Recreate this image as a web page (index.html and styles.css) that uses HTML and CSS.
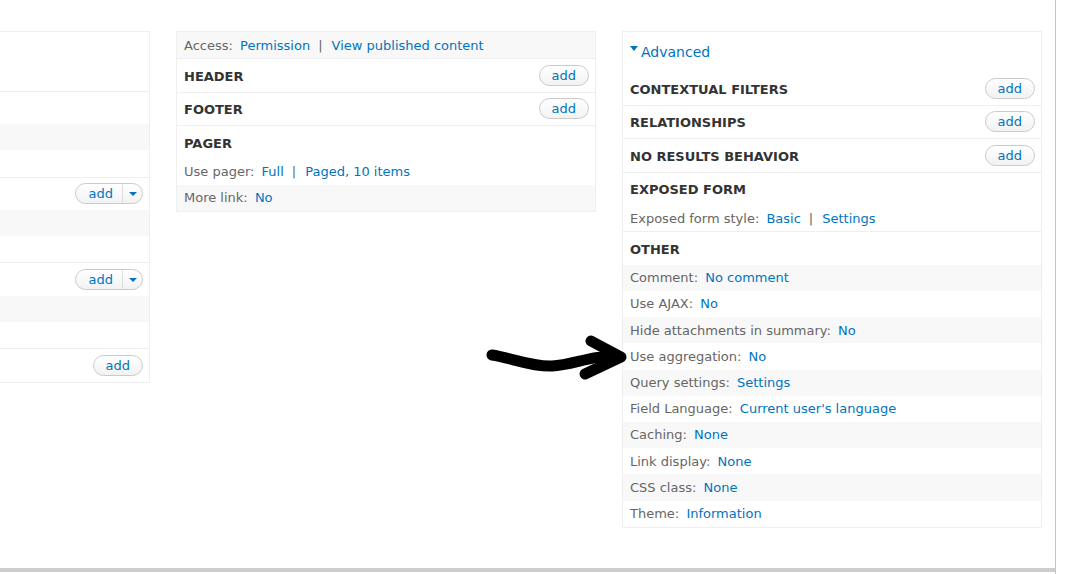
FILE: index.html
```html
<!DOCTYPE html>
<html lang="en">
<head>
<meta charset="utf-8">
<title>Views UI</title>
<link rel="stylesheet" href="styles.css">
</head>
<body>
<div class="page">
  <div class="content">
    <div class="columns">
      <div class="col col-first">
        <div class="bucket">
          <div class="title"></div>
          <div class="setting"></div>
        </div>
        <div class="bucket">
          <div class="title"></div>
          <div class="setting odd"></div>
          <div class="setting"></div>
        </div>
        <div class="bucket">
          <div class="title">
            <span class="btn split"><span class="split-main">add</span><span class="split-caret"><span class="caret"></span></span></span>
          </div>
          <div class="setting odd"></div>
          <div class="setting"></div>
        </div>
        <div class="bucket">
          <div class="title">
            <span class="btn split"><span class="split-main">add</span><span class="split-caret"><span class="caret"></span></span></span>
          </div>
          <div class="setting odd"></div>
          <div class="setting"></div>
        </div>
        <div class="bucket">
          <div class="title"><span class="btn">add</span></div>
        </div>
      </div>

      <div class="col">
        <div class="bucket">
          <div class="setting odd"><span class="lbl">Access:</span> <a href="#">Permission</a><span class="sep">|</span><a href="#">View published content</a></div>
        </div>
        <div class="bucket">
          <div class="title"><h3>Header</h3><span class="btn">add</span></div>
        </div>
        <div class="bucket">
          <div class="title"><h3>Footer</h3><span class="btn">add</span></div>
        </div>
        <div class="bucket">
          <div class="title"><h3>Pager</h3></div>
          <div class="setting"><span class="lbl">Use pager:</span> <a href="#">Full</a><span class="sep">|</span><a href="#">Paged, 10 items</a></div>
          <div class="setting odd"><span class="lbl">More link:</span> <a href="#">No</a></div>
        </div>
      </div>

      <div class="col">
        <div class="advanced"><span class="adv-caret"></span><a href="#">Advanced</a></div>
        <div class="bucket first">
          <div class="title"><h3>Contextual filters</h3><span class="btn">add</span></div>
        </div>
        <div class="bucket">
          <div class="title"><h3>Relationships</h3><span class="btn">add</span></div>
        </div>
        <div class="bucket">
          <div class="title"><h3>No results behavior</h3><span class="btn">add</span></div>
        </div>
        <div class="bucket">
          <div class="title"><h3>Exposed form</h3></div>
          <div class="setting"><span class="lbl">Exposed form style:</span> <a href="#">Basic</a><span class="sep">|</span><a href="#">Settings</a></div>
        </div>
        <div class="bucket">
          <div class="title"><h3>Other</h3></div>
          <div class="setting odd"><span class="lbl">Comment:</span> <a href="#">No comment</a></div>
          <div class="setting"><span class="lbl">Use AJAX:</span> <a href="#">No</a></div>
          <div class="setting odd"><span class="lbl">Hide attachments in summary:</span> <a href="#">No</a></div>
          <div class="setting"><span class="lbl">Use aggregation:</span> <a href="#">No</a></div>
          <div class="setting odd"><span class="lbl">Query settings:</span> <a href="#">Settings</a></div>
          <div class="setting"><span class="lbl">Field Language:</span> <a href="#">Current user's language</a></div>
          <div class="setting odd"><span class="lbl">Caching:</span> <a href="#">None</a></div>
          <div class="setting"><span class="lbl">Link display:</span> <a href="#">None</a></div>
          <div class="setting odd"><span class="lbl">CSS class:</span> <a href="#">None</a></div>
          <div class="setting"><span class="lbl">Theme:</span> <a href="#">Information</a></div>
        </div>
      </div>
    </div>
  </div>
</div>
<svg class="scribble" width="1079" height="574" viewBox="0 0 1079 574" aria-hidden="true">
  <path d="M492 355 C512 358 532 367 552 366 C574 365 594 354 619 357" fill="none" stroke="#000" stroke-width="11" stroke-linecap="round" stroke-linejoin="round"/>
  <path d="M591 341 L621 357 L585 374" fill="none" stroke="#000" stroke-width="11" stroke-linecap="round" stroke-linejoin="round"/>
</svg>
</body>
</html>
```

FILE: styles.css
```css
* { box-sizing: border-box; }
html, body { margin: 0; padding: 0; background: #fff; }
body {
  font-family: "DejaVu Sans", Verdana, sans-serif;
  font-size: 13px;
  color: #333;
  overflow: hidden;
  position: relative;
}
a { color: #0074bd; text-decoration: none; }

.page {
  width: 1056px;
  height: 574px;
  border-right: 1px solid #c4c4c4;
}
.content {
  height: 572px;
  border-bottom: 4px solid #cdcdcd;
  overflow: hidden;
}
.columns {
  display: flex;
  align-items: flex-start;
  gap: 26px;
  padding-top: 31px;
}
.col {
  flex: none;
  width: 420px;
  border: 1px solid #efefef;
}
.col-first {
  width: 600px;
  margin-left: -450px;
}

.bucket + .bucket { border-top: 1px solid #efefef; }
.bucket.first { border-top: 0; }

.title {
  display: flex;
  align-items: center;
  justify-content: space-between;
  height: 32.5px;
  padding: 0 6px 0 7px;
}
.col-first .title { justify-content: flex-end; }
.title h3 {
  margin: 0;
  padding-top: 3px;
  font-size: 13px;
  font-weight: bold;
  line-height: 20px;
  color: #333;
  text-transform: uppercase;
}

.setting {
  min-height: 26.2px;
  padding: 3.5px 7px;
  line-height: 19.2px;
  white-space: nowrap;
}
.setting.odd { background: #f8f8f8; }
.lbl { color: #666; margin-right: 3px; }
.sep { color: #666; margin: 0 9px 0 8px; }

.btn {
  display: inline-flex;
  align-items: center;
  height: 21px;
  padding: 0 12px;
  border: 1px solid #cacaca;
  border-radius: 11px;
  background: linear-gradient(#ffffff, #f2f2f2);
  color: #0074bd;
  font-size: 13px;
  line-height: 19px;
}
.btn.split { padding: 0; }
.split-main { padding: 0 9px 0 13px; }
.split-caret {
  display: flex;
  align-items: center;
  justify-content: center;
  width: 20px;
  height: 19px;
  border-left: 1px solid #dedede;
}
.caret {
  width: 0;
  height: 0;
  border-left: 4px solid transparent;
  border-right: 4px solid transparent;
  border-top: 4px solid #0074bd;
  margin-top: 1px;
}

.advanced {
  padding: 10px 7px 10px 7px;
  line-height: 20px;
  font-size: 14px;
  display: flex;
  align-items: flex-start;
}
.adv-caret {
  width: 0;
  height: 0;
  margin-top: 4px;
  margin-right: 3px;
  border-left: 4.5px solid transparent;
  border-right: 4.5px solid transparent;
  border-top: 5px solid #0074bd;
}

.scribble {
  position: absolute;
  left: 0;
  top: 0;
  pointer-events: none;
}
```
